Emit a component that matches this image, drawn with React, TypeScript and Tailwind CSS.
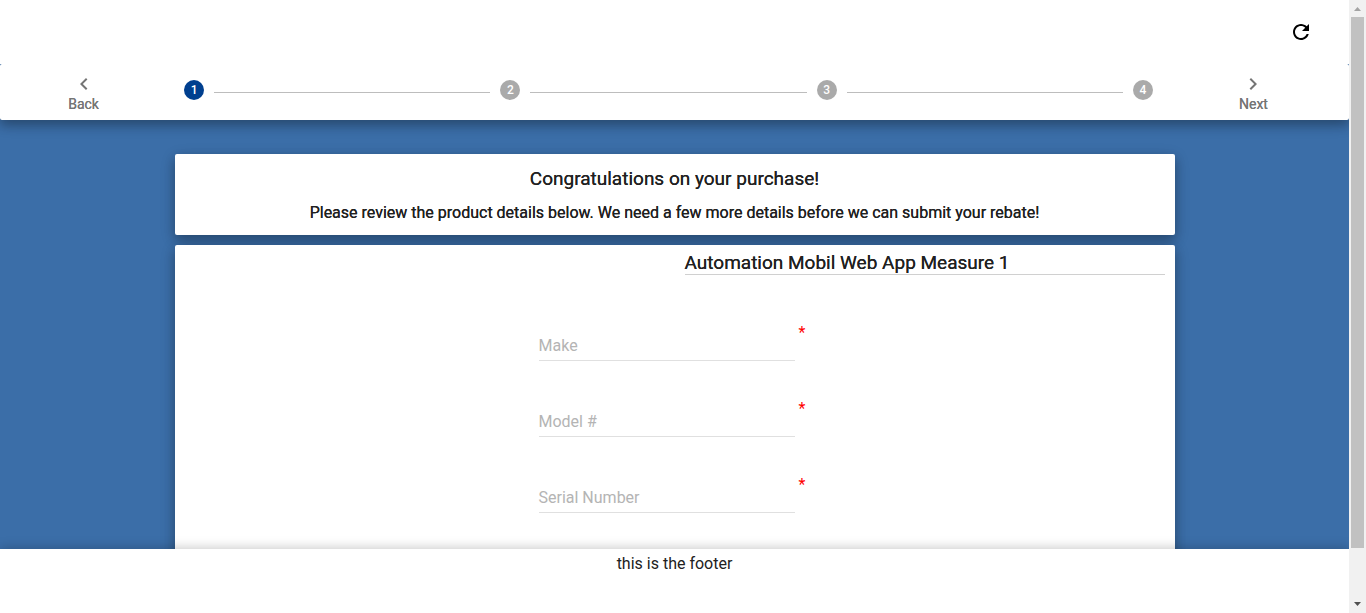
import { Fragment } from "react";

const steps = [1, 2, 3, 4];

const fields = [
  { id: "make", label: "Make" },
  { id: "model", label: "Model #" },
  { id: "serial", label: "Serial Number" },
];

const cardShadow = "shadow-[0_5px_11px_rgba(0,0,0,0.2),0_4px_15px_rgba(0,0,0,0.2)]";

const strongText = "[text-shadow:0_0_0_currentColor]";

function NavButton({ label, path }: { label: string; path: string }) {
  return (
    <div className="flex w-1/8 shrink-0 justify-center">
      <button
        type="button"
        className={`flex flex-col items-center text-sm leading-4 text-[#757575] ${strongText}`}
      >
        <svg viewBox="0 0 24 24" className="size-6" fill="currentColor" aria-hidden="true">
          <path d={path} />
        </svg>
        {label}
      </button>
    </div>
  );
}

function Stepper() {
  return (
    <nav className={`relative z-10 flex h-14 shrink-0 items-start rounded-xs bg-white pt-2 pr-3 ${cardShadow}`}>
      <NavButton label="Back" path="M15.41 7.41 14 6l-6 6 6 6 1.41-1.41L10.83 12z" />
      <ol className="flex min-w-0 flex-1 items-center gap-[10px] px-[17px] pt-2">
        {steps.map((step, index) => (
          <Fragment key={step}>
            {index > 0 && <li aria-hidden="true" className="mt-[5px] h-px flex-1 bg-[#bdbdbd]" />}
            <li
              className={`flex size-5 shrink-0 items-center justify-center rounded-full text-xs font-medium text-white ${
                index === 0 ? "bg-[#003f8f]" : "bg-[#aaaaaa]"
              }`}
            >
              {step}
            </li>
          </Fragment>
        ))}
      </ol>
      <NavButton label="Next" path="M10 6 8.59 7.41 13.17 12l-4.58 4.59L10 18l6-6z" />
    </nav>
  );
}

function Field({ id, label }: { id: string; label: string }) {
  return (
    <div className="flex h-[76px] items-start justify-center gap-1">
      <div className="grid w-64">
        <input
          id={id}
          type="text"
          required
          placeholder=" "
          className="peer col-start-1 row-start-1 h-[37px] w-full border-b border-[#e0e0e0] bg-transparent pt-2 text-base text-black/85 outline-none"
        />
        <label
          htmlFor={id}
          className="pointer-events-none col-start-1 row-start-1 self-end pb-[3px] text-base leading-6 text-[#b4b4b4] peer-focus:-translate-y-5 peer-focus:text-xs peer-[:not(:placeholder-shown)]:-translate-y-5 peer-[:not(:placeholder-shown)]:text-xs"
        >
          {label}
        </label>
      </div>
      <span aria-hidden="true" className="w-3 text-base leading-[18px] text-[#ff0000]">
        *
      </span>
    </div>
  );
}

function ScrollBar() {
  return (
    <div aria-hidden="true" className="relative z-30 flex w-[17px] shrink-0 flex-col items-center bg-[#f1f1f1]">
      <svg viewBox="0 0 17 17" className="size-[17px] shrink-0">
        <path d="M5 11h7L8.500 7z" fill="#a3a3a3" />
      </svg>
      <div className="w-[13px] flex-1 bg-[#c1c1c1]" />
      <div className="h-12 shrink-0" />
      <svg viewBox="0 0 17 17" className="size-[17px] shrink-0">
        <path d="M5 6h7L8.500 10z" fill="#505050" />
      </svg>
    </div>
  );
}

export default function App() {
  return (
    <div className="flex h-screen font-['Roboto',sans-serif] text-[#212121]">
      <div className="flex min-w-0 flex-1 flex-col overflow-hidden bg-[#3b6ea8]">
        <header className="relative z-20 flex h-16 shrink-0 items-center justify-end bg-white pr-9">
          <button type="button" aria-label="Refresh" className="text-black">
            <svg viewBox="0 0 24 24" className="size-6" fill="currentColor" aria-hidden="true">
              <path d="M17.650 6.350C16.200 4.900 14.210 4 12 4c-4.420 0-7.990 3.580-7.990 8s3.570 8 7.990 8c3.730 0 6.840-2.550 7.730-6h-2.080c-.82 2.330-3.040 4-5.650 4-3.310 0-6-2.690-6-6s2.690-6 6-6c1.660 0 3.140.69 4.220 1.780L13 11h7V4z" />
            </svg>
          </button>
        </header>
        <Stepper />
        <main className="min-h-0 flex-1 overflow-hidden pt-[34px]">
          <div className="mx-auto flex max-w-[1000px] flex-col gap-[10px]">
            <section className={`rounded-xs bg-white px-4 pt-[13px] pb-3 text-center ${cardShadow}`}>
              <h1 className={`text-[19px] leading-6 ${strongText}`}>Congratulations on your purchase!</h1>
              <p className={`mt-3 text-base leading-5 ${strongText}`}>
                Please review the product details below. We need a few more details before we can submit your rebate!
              </p>
            </section>
            <section className={`relative rounded-xs bg-white px-[10px] pt-[7px] pb-10 ${cardShadow}`}>
              <div className="ml-auto w-1/2 pl-[10px]">
                <h2 className={`border-b border-[#d0d0d0] text-[19px] leading-[22px] ${strongText}`}>
                  Automation Mobil Web App Measure 1
                </h2>
              </div>
              <form className="pt-[49px]">
                {fields.map((field) => (
                  <Field key={field.id} id={field.id} label={field.label} />
                ))}
              </form>
            </section>
          </div>
        </main>
        <footer className="relative z-10 h-16 shrink-0 bg-white pt-[3px] text-center text-base text-[#212121] shadow-[0_-1px_11px_rgba(0,0,0,0.22)]">
          this is the footer
        </footer>
      </div>
      <ScrollBar />
    </div>
  );
}
